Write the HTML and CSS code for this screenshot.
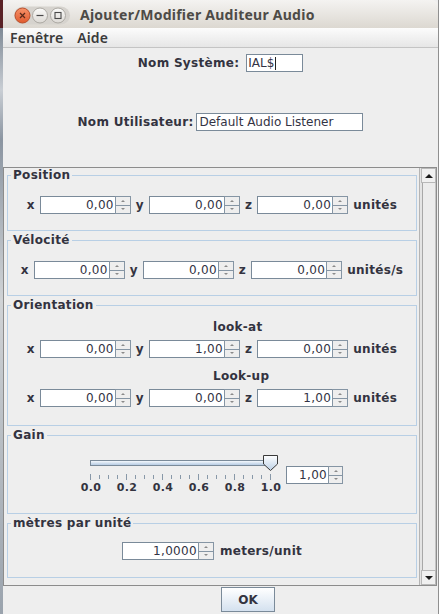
FILE: index.html
```html
<!DOCTYPE html>
<html>
<head>
<meta charset="utf-8">
<link rel="stylesheet" href="styles.css">
</head>
<body>
<div class="desk">
  <div class="edge"></div>
  <div class="win">
    <div class="titlebar">
      <svg class="wbtns" width="72" height="28" viewBox="0 0 72 28">
        <defs>
          <linearGradient id="gc" x1="0" y1="0" x2="0" y2="1">
            <stop offset="0" stop-color="#f7936a"/>
            <stop offset="1" stop-color="#e05a2e"/>
          </linearGradient>
          <linearGradient id="gg" x1="0" y1="0" x2="0" y2="1">
            <stop offset="0" stop-color="#fbfbfa"/>
            <stop offset="1" stop-color="#dcd9d4"/>
          </linearGradient>
        </defs>
        <rect x="11" y="6.5" width="56" height="18" rx="9" fill="#d6d3ce"/>
        <circle cx="55" cy="15.5" r="7.5" fill="url(#gg)" stroke="#aca9a3"/>
        <circle cx="37" cy="15.5" r="7.5" fill="url(#gg)" stroke="#aca9a3"/>
        <circle cx="19.5" cy="15.5" r="7.5" fill="url(#gc)" stroke="#b9502c"/>
        <path d="M17 13 L22 18 M22 13 L17 18" stroke="#5a2a1a" stroke-width="1.2"/>
        <path d="M33.5 15.5 H40.5" stroke="#4a4a4a" stroke-width="1.2"/>
        <rect x="52" y="12.5" width="6" height="6" fill="none" stroke="#4a4a4a" stroke-width="1.1"/>
      </svg>
      <span class="wtitle">Ajouter/Modifier Auditeur Audio</span>
    </div>
    <div class="menubar"><span class="menu">Fenêtre</span><span class="menu">Aide</span></div>
    <div class="content">
      <div class="namerow r1">
        <span class="lbl">Nom Système:</span>
        <div class="tf sys">IAL$<span class="caret"></span></div>
      </div>
      <div class="namerow r2">
        <span class="lbl">Nom Utilisateur:</span>
        <div class="tf user">Default Audio Listener</div>
      </div>
      <div class="scroll">
        <div class="viewport">
          <fieldset class="panel p-pos">
            <legend>Position</legend>
            <div class="row">
              <span class="lbl">x</span>
              <div class="spin"><div class="sf">0,00</div><div class="sb"><span class="up"></span><span class="dn"></span></div></div>
              <span class="lbl">y</span>
              <div class="spin"><div class="sf">0,00</div><div class="sb"><span class="up"></span><span class="dn"></span></div></div>
              <span class="lbl">z</span>
              <div class="spin"><div class="sf">0,00</div><div class="sb"><span class="up"></span><span class="dn"></span></div></div>
              <span class="lbl">unités</span>
            </div>
          </fieldset>
          <fieldset class="panel p-vel">
            <legend>Vélocité</legend>
            <div class="row">
              <span class="lbl">x</span>
              <div class="spin"><div class="sf">0,00</div><div class="sb"><span class="up"></span><span class="dn"></span></div></div>
              <span class="lbl">y</span>
              <div class="spin"><div class="sf">0,00</div><div class="sb"><span class="up"></span><span class="dn"></span></div></div>
              <span class="lbl">z</span>
              <div class="spin"><div class="sf">0,00</div><div class="sb"><span class="up"></span><span class="dn"></span></div></div>
              <span class="lbl">unités/s</span>
            </div>
          </fieldset>
          <fieldset class="panel p-ori">
            <legend>Orientation</legend>
            <div class="sub">look-at</div>
            <div class="row">
              <span class="lbl">x</span>
              <div class="spin"><div class="sf">0,00</div><div class="sb"><span class="up"></span><span class="dn"></span></div></div>
              <span class="lbl">y</span>
              <div class="spin"><div class="sf">1,00</div><div class="sb"><span class="up"></span><span class="dn"></span></div></div>
              <span class="lbl">z</span>
              <div class="spin"><div class="sf">0,00</div><div class="sb"><span class="up"></span><span class="dn"></span></div></div>
              <span class="lbl">unités</span>
            </div>
            <div class="sub sub2">Look-up</div>
            <div class="row">
              <span class="lbl">x</span>
              <div class="spin"><div class="sf">0,00</div><div class="sb"><span class="up"></span><span class="dn"></span></div></div>
              <span class="lbl">y</span>
              <div class="spin"><div class="sf">0,00</div><div class="sb"><span class="up"></span><span class="dn"></span></div></div>
              <span class="lbl">z</span>
              <div class="spin"><div class="sf">1,00</div><div class="sb"><span class="up"></span><span class="dn"></span></div></div>
              <span class="lbl">unités</span>
            </div>
          </fieldset>
          <fieldset class="panel p-gain">
            <legend>Gain</legend>
            <div class="row gainrow">
              <div class="slider">
                <div class="track"></div>
                <svg class="thumb" width="15" height="17" viewBox="0 0 15 17">
                  <defs>
                    <linearGradient id="gt" x1="0" y1="0" x2="0" y2="1">
                      <stop offset="0" stop-color="#ffffff"/>
                      <stop offset="1" stop-color="#bcd0e6"/>
                    </linearGradient>
                  </defs>
                  <path d="M0.5 0.5 H14.5 V9 L7.5 15.5 L0.5 9 Z" fill="url(#gt)" stroke="#3a3a3a"/>
                </svg>
                <div class="ticks"></div>
                <div class="tlabels"><span>0.0</span><span>0.2</span><span>0.4</span><span>0.6</span><span>0.8</span><span>1.0</span></div>
              </div>
              <div class="spin small"><div class="sf">1,00</div><div class="sb"><span class="up"></span><span class="dn"></span></div></div>
            </div>
          </fieldset>
          <fieldset class="panel p-met">
            <legend>mètres par unité</legend>
            <div class="row">
              <div class="spin"><div class="sf">1,0000</div><div class="sb"><span class="up"></span><span class="dn"></span></div></div>
              <span class="lbl">meters/unit</span>
            </div>
          </fieldset>
        </div>
        <div class="vbar">
          <div class="arrow aup"></div>
          <div class="vthumb"></div>
          <div class="arrow adn"></div>
        </div>
      </div>
      <div class="buttons"><button class="ok">OK</button></div>
    </div>
  </div>
</div>
</body>
</html>
```
FILE: styles.css
```css
html, body {
  margin: 0;
  padding: 0;
}
body {
  width: 439px;
  height: 614px;
  overflow: hidden;
  background: #9aa3ad;
  font-family: "DejaVu Sans", sans-serif;
  color: #333333;
}
.desk {
  display: flex;
  height: 614px;
}
.edge {
  width: 3px;
  background: linear-gradient(#5a2226 0, #5a2226 28px, #7f8a96 28px, #c9ced4 90px, #8b95a1 140px, #d0d3d6 300px, #9aa3ad 614px);
}
.win {
  width: 435px;
  display: flex;
  flex-direction: column;
  background: #eeeeee;
  border-right: 1px solid #8f8f8f;
}
.titlebar {
  height: 28px;
  display: flex;
  align-items: center;
  background: linear-gradient(#f4f3f1, #dcd8d1);
  border-top-left-radius: 6px;
  border-top-right-radius: 6px;
}
.wbtns {
  display: block;
  flex: none;
}
.wtitle {
  margin-left: 5px;
  font-family: "Noto Sans", sans-serif;
  font-weight: bold;
  font-size: 14px;
  letter-spacing: 0.25px;
  color: #4d4b47;
  padding-top: 1px;
}
.menubar {
  height: 19px;
  display: flex;
  align-items: center;
  gap: 14px;
  padding-left: 7px;
  background: linear-gradient(#fcfcfc, #e6e6e6);
  border-bottom: 1px solid #c4c4c4;
}
.menu {
  font-family: "Noto Sans", sans-serif;
  font-size: 14px;
  font-weight: 600;
  color: #3a3a3a;
  letter-spacing: 0.1px;
}
.content {
  flex: 1;
  display: flex;
  flex-direction: column;
}
.lbl {
  font-weight: bold;
  font-size: 12px;
  letter-spacing: 0.3px;
  color: #333340;
  white-space: nowrap;
}
.namerow {
  display: flex;
  justify-content: center;
  align-items: center;
  height: 18px;
}
.r1 {
  margin-top: 6px;
  gap: 7px;
}
.r2 {
  margin-top: 41px;
  gap: 3px;
}
.tf {
  box-sizing: border-box;
  height: 18px;
  border: 1px solid #7a8a99;
  background: #ffffff;
  font-size: 12px;
  line-height: 16px;
  color: #333344;
  padding-left: 1px;
  white-space: nowrap;
  display: flex;
  align-items: center;
}
.sys {
  width: 57px;
}
.caret {
  width: 1px;
  height: 13px;
  background: #222;
  margin-left: 1px;
}
.user {
  width: 167px;
  padding-left: 2px;
}
.scroll {
  margin-top: 36px;
  height: 419px;
  box-sizing: border-box;
  border: 1px solid #8c8c8c;
  display: flex;
  margin-right: 1px;
}
.viewport {
  flex: 1;
  padding: 0 2px 0 3px;
  overflow: hidden;
}
.panel {
  border: 1px solid #b8cfe5;
  margin: 0 0 2px 0;
  padding: 0;
  min-width: 0;
}
.panel legend {
  font-weight: bold;
  font-size: 12px;
  letter-spacing: 0.3px;
  line-height: 14px;
  color: #333340;
  padding: 0 2px;
  margin-left: 3px;
}
.row {
  display: flex;
  justify-content: center;
  align-items: center;
  gap: 5px;
  height: 18px;
}
.p-pos .row, .p-vel .row {
  margin: 14px 0 16px;
}
.sub {
  font-weight: bold;
  font-size: 12px;
  letter-spacing: 0.3px;
  line-height: 14px;
  color: #333340;
  padding-left: 205px;
  margin-top: 8px;
  margin-bottom: 6px;
}
.sub2 {
  margin-top: 11px;
}
.p-ori .row:last-child {
  margin-bottom: 18px;
}
.spin {
  display: flex;
  width: 91px;
  height: 18px;
  box-sizing: border-box;
}
.spin.small {
  width: 57px;
}
.sf {
  flex: 1;
  box-sizing: border-box;
  border: 1px solid #7a8a99;
  border-right: none;
  background: #ffffff;
  font-size: 12px;
  letter-spacing: 0.3px;
  line-height: 16px;
  text-align: right;
  padding-right: 1px;
  color: #333344;
}
.sb {
  width: 16px;
  display: flex;
  flex-direction: column;
}
.small .sb {
  width: 15px;
}
.sb span {
  flex: 1;
  border: 1px solid #8595a4;
  background: #eeeeee;
  position: relative;
}
.sb .dn {
  border-top: none;
}
.sb span::after {
  content: "";
  position: absolute;
  left: 50%;
  top: 50%;
  margin-left: -2px;
  margin-top: -1px;
  border-left: 2px solid transparent;
  border-right: 2px solid transparent;
}
.sb .up::after {
  border-bottom: 2px solid #8a8a8a;
}
.sb .dn::after {
  border-top: 2px solid #8a8a8a;
}
.gainrow {
  height: 40px;
  gap: 9px;
  margin: 13px 0 18px;
  transform: translateX(1px);
}
.slider {
  position: relative;
  width: 194px;
  height: 40px;
}
.track {
  position: absolute;
  left: 7px;
  top: 5px;
  width: 180px;
  height: 6px;
  box-sizing: border-box;
  border: 1px solid #7a8a99;
  background: linear-gradient(#f4f8fc, #b6cbe3);
}
.thumb {
  position: absolute;
  left: 180px;
  top: 0;
}
.ticks {
  position: absolute;
  left: 7px;
  top: 19px;
  width: 181px;
  height: 6px;
  background:
    repeating-linear-gradient(to right, #8898a8 0, #8898a8 1px, transparent 1px, transparent 36px) 0 0 / 181px 6px no-repeat,
    repeating-linear-gradient(to right, #8898a8 0, #8898a8 1px, transparent 1px, transparent 9px) 0 1px / 181px 4px no-repeat;
}
.tlabels {
  position: absolute;
  left: -10px;
  top: 26px;
  width: 216px;
  display: flex;
}
.tlabels span {
  width: 36px;
  text-align: center;
  font-weight: bold;
  font-size: 11px;
  letter-spacing: 0.3px;
  line-height: 14px;
  color: #333340;
}
.p-met .row {
  margin: 12px 0 17px;
}
.p-met .spin {
  width: 92px;
}
.p-met .row {
  gap: 6px;
}
.vbar {
  width: 16px;
  display: flex;
  flex-direction: column;
  border-left: 1px solid #b4b4b4;
  background: #e4e4e4;
}
.arrow {
  height: 15px;
  box-sizing: border-box;
  border: 1px solid #b8b8b8;
  background: #f0f0f0;
  position: relative;
  margin-left: 1px;
}
.arrow::after {
  content: "";
  position: absolute;
  left: 3px;
  top: 5px;
  border-left: 4px solid transparent;
  border-right: 4px solid transparent;
}
.aup::after {
  border-bottom: 4px solid #1a1a1a;
}
.adn::after {
  border-top: 4px solid #1a1a1a;
}
.vthumb {
  flex: 1;
  margin-left: 2px;
  border-left: 1px solid #a8a8a8;
  border-right: 1px solid #c4c4c4;
  background: #ececec;
}
.buttons {
  display: flex;
  padding-left: 218px;
  padding-top: 1px;
}
.ok {
  width: 54px;
  height: 25px;
  border: 1px solid #7a8a99;
  border-radius: 0;
  background: linear-gradient(#ffffff, #d4e1ef);
  font-family: "DejaVu Sans", sans-serif;
  font-weight: bold;
  font-size: 12px;
  color: #333340;
  padding: 0;
}
```
